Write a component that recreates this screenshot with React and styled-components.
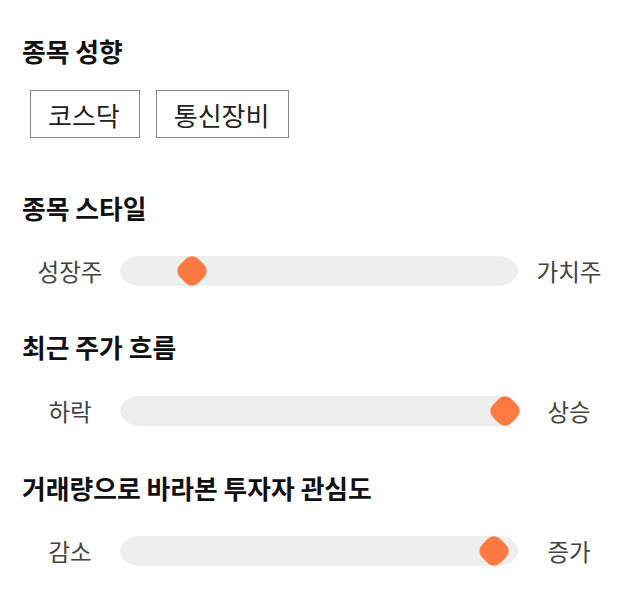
import React from 'react'
import styled, { createGlobalStyle } from 'styled-components'

const GlobalStyle = createGlobalStyle`
  body {
    margin: 0;
    background: #fff;
    font-family: "Noto Sans CJK KR", "Noto Sans", sans-serif;
  }
`

const Page = styled.div`
  width: 640px;
  box-sizing: border-box;
  padding: 35px 20px 0 20px;
`

const Section = styled.section`
  margin-bottom: ${props => props.gap}px;
`

const Title = styled.h3`
  margin: 0 0 ${props => props.space}px 2px;
  font-size: 25.8px;
  line-height: 32px;
  font-weight: 700;
  color: #111;
`

const ChipRow = styled.div`
  display: flex;
  gap: 16px;
  padding-left: 10px;
`

const Chip = styled.div`
  height: 48px;
  box-sizing: border-box;
  padding: 0 19px 0 17px;
  display: flex;
  align-items: center;
  border: 1px solid #8a8a8a;
  font-size: 26px;
  color: #222;
`

const SliderRow = styled.div`
  display: grid;
  grid-template-columns: 100px 398px 1fr;
  align-items: center;
  height: 40px;
`

const Label = styled.span`
  text-align: center;
  font-size: 23.5px;
  color: #444;
`

const Track = styled.div`
  position: relative;
  height: 30px;
  background: #eeeeee;
  border-radius: 20px / 15px;
`

const Thumb = styled.div`
  position: absolute;
  top: 50%;
  width: 26px;
  height: 26px;
  border-radius: 9px;
  background: #ff7a40;
  transform: translate(-50%, -50%) rotate(45deg);
`

function Slider({ left, right, value }) {
  return (
    <SliderRow>
      <Label>{left}</Label>
      <Track>
        <Thumb style={{ left: `${value}%` }} />
      </Track>
      <Label>{right}</Label>
    </SliderRow>
  )
}

export default function App() {
  return (
    <Page>
      <GlobalStyle />
      <Section gap={54}>
        <Title space={23}>종목 성향</Title>
        <ChipRow>
          <Chip>코스닥</Chip>
          <Chip>통신장비</Chip>
        </ChipRow>
      </Section>
      <Section gap={40}>
        <Title space={27}>종목 스타일</Title>
        <Slider left="성장주" right="가치주" value={18.1} />
      </Section>
      <Section gap={41}>
        <Title space={28}>최근 주가 흐름</Title>
        <Slider left="하락" right="상승" value={96.7} />
      </Section>
      <Section gap={0}>
        <Title space={27}>거래량으로 바라본 투자자 관심도</Title>
        <Slider left="감소" right="증가" value={94} />
      </Section>
    </Page>
  )
}
